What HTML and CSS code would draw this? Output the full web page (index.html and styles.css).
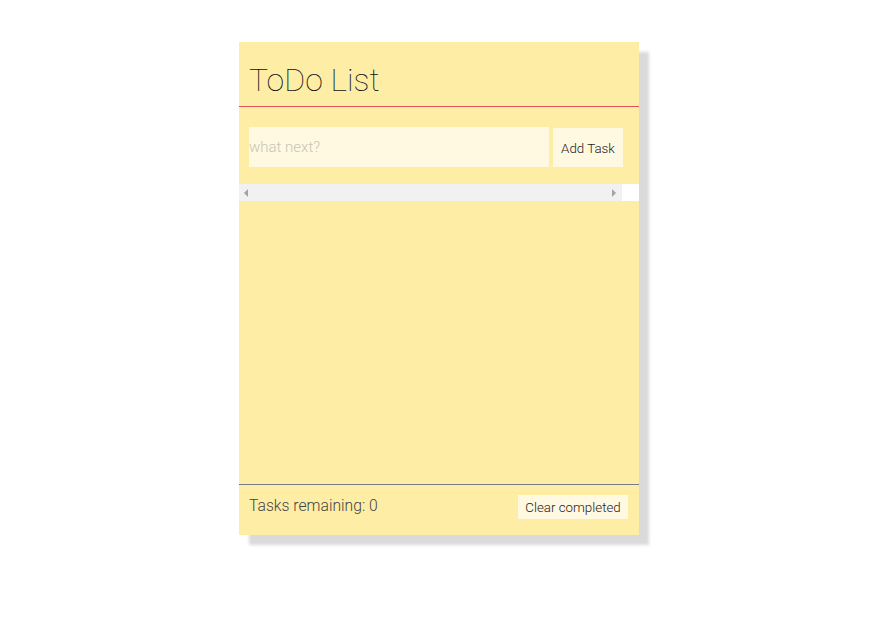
FILE: index.html
```html
<!DOCTYPE html>
<html>
<head>
<meta charset="utf-8">
<link rel="stylesheet" href="styles.css">
</head>
<body>
<div class="card">
  <header class="head">
    <h1 class="title">ToDo List</h1>
  </header>
  <form class="add-form">
    <input class="task-input" type="text" placeholder="what next?">
    <button class="btn add-btn" type="button">Add Task</button>
  </form>
  <div class="hscroll">
    <div class="track">
      <span class="arrow arrow-left"></span>
      <span class="arrow arrow-right"></span>
    </div>
    <div class="corner"></div>
  </div>
  <ul class="list"></ul>
  <footer class="foot">
    <span class="remaining">Tasks remaining: 0</span>
    <button class="btn clear-btn" type="button">Clear completed</button>
  </footer>
</div>
</body>
</html>
```
FILE: styles.css
```css
html, body {
  margin: 0;
  padding: 0;
  background: #ffffff;
  font-family: Roboto, "Liberation Sans", sans-serif;
}
body {
  min-height: 630px;
  padding-top: 42px;
  box-sizing: border-box;
}
.card {
  width: 400px;
  margin: 0 auto;
  background: #feeda5;
  box-shadow: 10px 10px 3px #dadada;
  display: flex;
  flex-direction: column;
}
.head {
  height: 64px;
  padding: 0 10px;
  border-bottom: 1px solid #e0545a;
  display: flex;
  align-items: center;
}
.title {
  margin: 0;
  font-size: 32px;
  font-weight: 100;
  color: #111;
  line-height: 40px;
  padding-top: 11px;
}
.add-form {
  display: flex;
  align-items: flex-start;
  padding: 20px 16px 17px 10px;
  margin: 0;
}
.task-input {
  width: 300px;
  height: 40px;
  box-sizing: border-box;
  border: none;
  outline: none;
  padding: 0;
  margin: 0 4px 0 0;
  background: #fff9e1;
  font-family: Roboto, "Liberation Sans", sans-serif;
  font-size: 15px;
  font-weight: 300;
  color: #333;
}
.task-input::placeholder {
  color: #c8c4b4;
}
.btn {
  border: none;
  background: #fff9e1;
  font-family: Roboto, "Liberation Sans", sans-serif;
  font-size: 13.33px;
  font-weight: 300;
  color: #222;
  padding: 0;
}
.add-btn {
  width: 70px;
  height: 39px;
  margin-top: 1px;
  padding-top: 2px;
}
.hscroll {
  display: flex;
  height: 17px;
}
.track {
  flex: 1;
  background: #f1f1f1;
  display: flex;
  align-items: center;
  justify-content: space-between;
  padding: 0 6px 0 5px;
}
.arrow {
  width: 0;
  height: 0;
  border-top: 4px solid transparent;
  border-bottom: 4px solid transparent;
}
.arrow-left {
  border-right: 4px solid #a3a3a3;
}
.arrow-right {
  border-left: 4px solid #a3a3a3;
}
.corner {
  width: 17px;
  background: #ffffff;
}
.list {
  height: 283px;
  margin: 0;
  padding: 0;
  list-style: none;
}
.foot {
  height: 50px;
  border-top: 1px solid #777a88;
  display: flex;
  justify-content: space-between;
  align-items: flex-start;
  padding: 0 11px 0 10px;
}
.remaining {
  font-size: 15.7px;
  font-weight: 300;
  color: #444;
  margin-top: 11px;
}
.clear-btn {
  width: 110px;
  height: 24px;
  padding: 1px 0 0;
  margin-top: 10px;
}
```
